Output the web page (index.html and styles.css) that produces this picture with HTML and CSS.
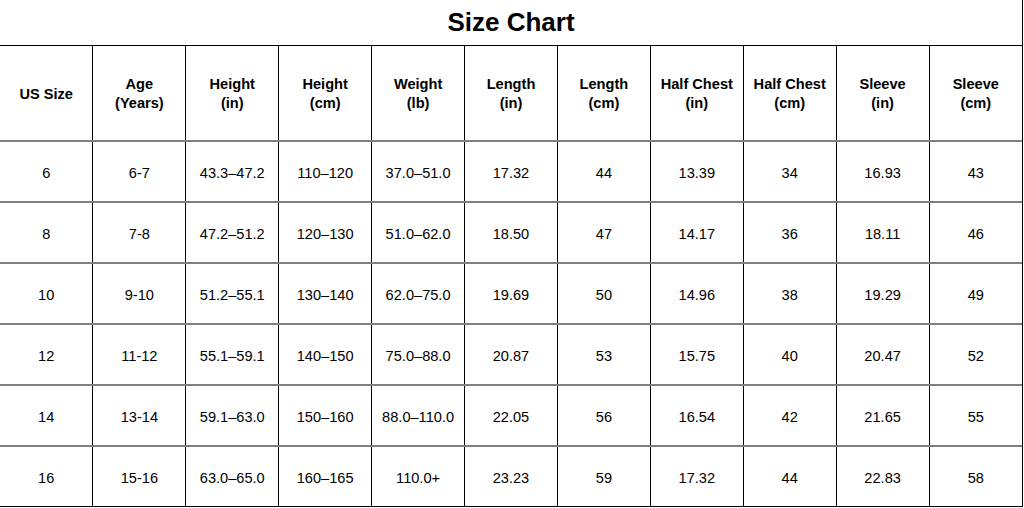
FILE: index.html
```html
<!DOCTYPE html>
<html>
<head>
<meta charset="utf-8">
<link rel="stylesheet" href="styles.css">
</head>
<body>
<div class="chart">
  <h1 class="title">Size Chart</h1>
  <table class="grid">
    <thead>
      <tr>
        <th>US Size</th><th>Age<br>(Years)</th><th>Height<br>(in)</th><th>Height<br>(cm)</th><th>Weight<br>(lb)</th><th>Length<br>(in)</th><th>Length<br>(cm)</th><th>Half Chest<br>(in)</th><th>Half Chest<br>(cm)</th><th>Sleeve<br>(in)</th><th>Sleeve<br>(cm)</th>
      </tr>
    </thead>
    <tbody>
      <tr><td>6</td><td>6-7</td><td>43.3–47.2</td><td>110–120</td><td>37.0–51.0</td><td>17.32</td><td>44</td><td>13.39</td><td>34</td><td>16.93</td><td>43</td></tr>
      <tr><td>8</td><td>7-8</td><td>47.2–51.2</td><td>120–130</td><td>51.0–62.0</td><td>18.50</td><td>47</td><td>14.17</td><td>36</td><td>18.11</td><td>46</td></tr>
      <tr><td>10</td><td>9-10</td><td>51.2–55.1</td><td>130–140</td><td>62.0–75.0</td><td>19.69</td><td>50</td><td>14.96</td><td>38</td><td>19.29</td><td>49</td></tr>
      <tr><td>12</td><td>11-12</td><td>55.1–59.1</td><td>140–150</td><td>75.0–88.0</td><td>20.87</td><td>53</td><td>15.75</td><td>40</td><td>20.47</td><td>52</td></tr>
      <tr><td>14</td><td>13-14</td><td>59.1–63.0</td><td>150–160</td><td>88.0–110.0</td><td>22.05</td><td>56</td><td>16.54</td><td>42</td><td>21.65</td><td>55</td></tr>
      <tr><td>16</td><td>15-16</td><td>63.0–65.0</td><td>160–165</td><td>110.0+</td><td>23.23</td><td>59</td><td>17.32</td><td>44</td><td>22.83</td><td>58</td></tr>
    </tbody>
  </table>
</div>
</body>
</html>
```

FILE: styles.css
```css
html, body {
  margin: 0;
  padding: 0;
  background: #fff;
}
body {
  font-family: "Liberation Sans", Arial, sans-serif;
  color: #000;
}
.chart {
  width: 1022px;
  border-right: 1px solid #000;
}
.title {
  margin: 0;
  height: 45px;
  line-height: 45px;
  font-size: 26px;
  font-weight: bold;
  text-align: center;
}
.grid {
  width: 1022px;
  table-layout: fixed;
  border-collapse: collapse;
  font-size: 14.6px;
}
.grid th, .grid td {
  text-align: center;
  vertical-align: middle;
  padding: 2px 0 0;
  border-left: 1px solid #000;
  border-bottom: 2px solid #808080;
}
.grid th:first-child, .grid td:first-child {
  border-left: none;
}
.grid th {
  height: 92px;
  font-weight: bold;
  line-height: 19px;
  border-top: 1px solid #000;
}
.grid td {
  height: 57px;
}
.grid tbody tr:last-child td {
  border-bottom: 1px solid #000;
}
```
